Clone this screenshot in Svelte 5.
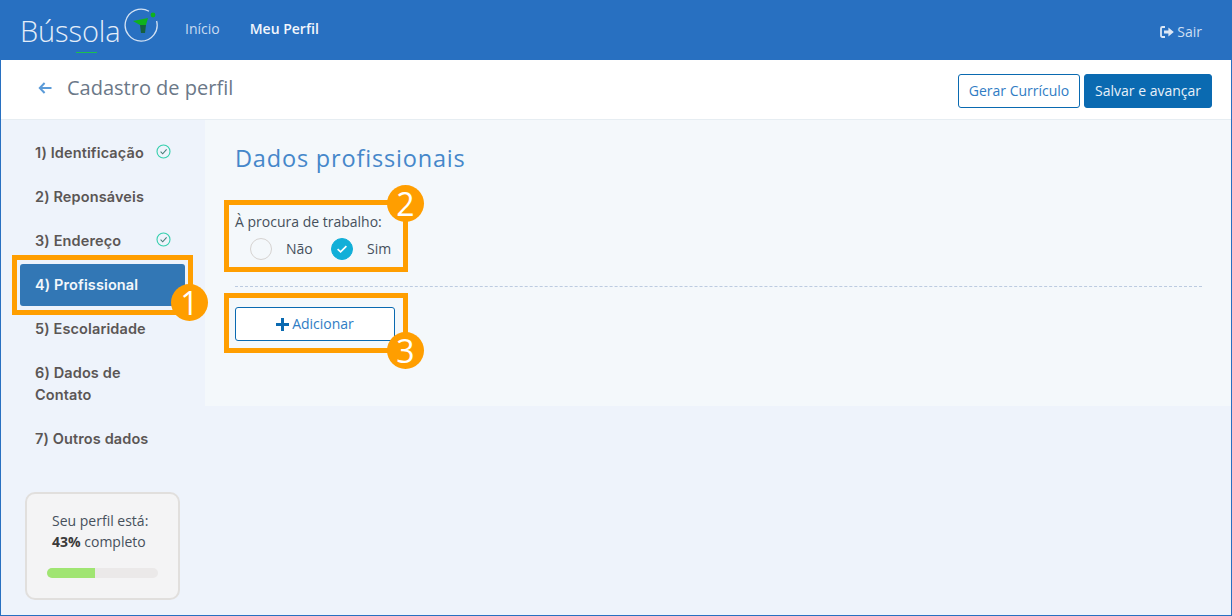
<script>
  const steps = [
    { label: '1) Identificação', done: true },
    { label: '2) Reponsáveis' },
    { label: '3) Endereço', done: true },
    { label: '4) Profissional', active: true },
    { label: '5) Escolaridade' },
    { label: '6) Dados de Contato' },
    { label: '7) Outros dados' }
  ];
  const marks = [
    { n: 1, cls: 'm1' },
    { n: 2, cls: 'm2' },
    { n: 3, cls: 'm3' }
  ];
</script>

<div class="page">
  <header class="top">
    <div class="logo">
      <span class="logo-text">Bússola</span>
      <svg class="compass" width="36" height="36" viewBox="0 0 36 36" fill="none">
        <path d="M26 4.2A16 16 0 1 0 33.6 14" stroke="#d4e2f3" stroke-width="1.3" />
        <circle cx="30" cy="8" r="2.4" fill="#0fb21c" />
        <path d="M10 14 25 11 23 18 17 18Z" fill="#0fb21c" />
        <path d="M17 18 23 18 22 26 18 26Z" fill="#16603f" />
      </svg>
      <i class="logo-line"></i>
    </div>
    <nav class="nav">
      <a href="#a">Início</a>
      <a href="#b" class="current">Meu Perfil</a>
    </nav>
    <a class="exit" href="#c">
      <svg width="14" height="12" viewBox="0 0 14 12" fill="none">
        <path d="M5 1H2.4A1.4 1.4 0 0 0 1 2.4v7.2A1.4 1.4 0 0 0 2.4 11H5" stroke="#dce7f5" stroke-width="1.8" />
        <path d="M4 4.4h4.4V1.6L13.8 6 8.4 10.4V7.6H4Z" fill="#dce7f5" />
      </svg>
      Sair
    </a>
  </header>

  <section class="sub">
    <svg class="back" width="14" height="12" viewBox="0 0 14 12" fill="none">
      <path d="M13.5 6H2M6.6 1 1.8 6l4.8 5" stroke="#5b9bd8" stroke-width="2" />
    </svg>
    <h1>Cadastro de perfil</h1>
    <div class="actions">
      <button class="btn outline">Gerar Currículo</button>
      <button class="btn solid">Salvar e avançar</button>
    </div>
  </section>

  <div class="body">
    <aside class="side">
      <ul class="steps">
        {#each steps as s}
          <li class="step" class:active={s.active}>
            <span>{s.label}</span>
            {#if s.done}
              <svg class="ok" width="15" height="15" viewBox="0 0 15 15" fill="none">
                <circle cx="7.5" cy="7.5" r="6.5" stroke="#35cfae" stroke-width="1.1" />
                <path d="M4.6 7.7 6.7 9.8 10.6 5.4" stroke="#4a7d78" stroke-width="1.1" />
              </svg>
            {/if}
          </li>
        {/each}
      </ul>
      <div class="progress-card">
        <p>Seu perfil está:<br /><b>43%</b> completo</p>
        <div class="track"><div class="fill" style="width: 43%"></div></div>
      </div>
    </aside>

    <main class="panel">
      <h2>Dados profissionais</h2>
      <div class="field">
        <div class="label">À procura de trabalho:</div>
        <div class="radios">
          <span class="radio"></span>
          <span class="opt no">Não</span>
          <span class="radio on">
            <svg width="12" height="10" viewBox="0 0 12 10" fill="none">
              <path d="M1.6 5.2 4.6 7.8 10.4 2.2" stroke="#fff" stroke-width="1.7" />
            </svg>
          </span>
          <span class="opt">Sim</span>
        </div>
      </div>
      <hr class="divider" />
      <button class="btn add">
        <svg width="13" height="13" viewBox="0 0 13 13"><path d="M5 0h3v5h5v3H8v5H5V8H0V5h5Z" fill="#0a6ab1" /></svg>
        <span class="add-text">Adicionar</span>
      </button>
    </main>
  </div>

  {#each marks as m}
    <div class="mark {m.cls}"><span class="num">{m.n}</span></div>
  {/each}
</div>

<style>
  :global(body) {
    margin: 0;
    background: #eef3fb;
  }
  * {
    box-sizing: border-box;
  }
  .page {
    position: relative;
    width: 1232px;
    height: 616px;
    border: 1px solid #2870c1;
    border-top: 0;
    background: #eef3fb;
    font-family: "Open Sans", "Liberation Sans", sans-serif;
    font-size: 14px;
    color: #46505c;
    display: flex;
    flex-direction: column;
    overflow: hidden;
  }
  a {
    text-decoration: none;
  }
  .top {
    height: 60px;
    margin: 0 -1px;
    background: #2870c1;
    display: flex;
    align-items: flex-start;
    flex: none;
  }
  .logo {
    position: relative;
    width: 185px;
    height: 60px;
    flex: none;
  }
  .logo-text {
    position: absolute;
    left: 20px;
    top: 11px;
    font-size: 29px;
    line-height: 40px;
    font-weight: 300;
    letter-spacing: -0.1px;
    color: #e4edf8;
  }
  .compass {
    position: absolute;
    left: 123px;
    top: 7px;
  }
  .logo-line {
    position: absolute;
    left: 76px;
    top: 52px;
    width: 21px;
    height: 1px;
    background: #1cc04f;
  }
  .nav {
    display: flex;
    gap: 30px;
    padding-top: 19px;
    line-height: 20px;
  }
  .nav a {
    color: #c9dcf2;
  }
  .nav a.current {
    color: #f2f6fc;
    font-weight: 600;
  }
  .exit {
    margin-left: auto;
    margin-right: 30px;
    margin-top: 22px;
    line-height: 20px;
    color: #cfdff2;
    font-size: 14px;
    display: flex;
    align-items: center;
    gap: 3px;
  }
  .sub {
    height: 60px;
    flex: none;
    background: #fff;
    border-bottom: 1px solid #e6edf2;
    display: flex;
    align-items: center;
    padding: 0 19px 0 37px;
  }
  .back {
    margin-right: 15px;
    flex: none;
    position: relative;
    top: -2px;
  }
  h1 {
    margin: 0;
    font-size: 20px;
    font-weight: 400;
    color: #6b7888;
    line-height: 28px;
    position: relative;
    top: -2px;
  }
  .actions {
    margin-left: auto;
    display: flex;
    gap: 4px;
    position: relative;
    top: 1px;
  }
  .btn {
    height: 34px;
    font: inherit;
    font-size: 14px;
    border-radius: 3px;
    padding: 0;
    cursor: pointer;
    border: 1px solid #0a6ab1;
  }
  .outline {
    width: 122px;
    background: #fff;
    color: #2f7cc4;
  }
  .solid {
    width: 128px;
    background: #0a6ab1;
    color: #e8f1f9;
  }
  .body {
    flex: 1;
    display: flex;
    min-height: 0;
  }
  .side {
    width: 204px;
    flex: none;
    padding: 12px 19px 15px 19px;
    display: flex;
    flex-direction: column;
  }
  .steps {
    list-style: none;
    margin: 0;
    padding: 0;
  }
  .step {
    margin-bottom: 2px;
    width: 165px;
    padding: 10px 15px;
    border-radius: 3px;
    line-height: 22px;
    font-family: Inter, "Noto Sans", sans-serif;
    font-weight: 600;
    font-size: 14.5px;
    letter-spacing: 0.12px;
    color: #5b5655;
    display: flex;
    align-items: center;
    justify-content: space-between;
  }
  .step.active {
    background: #3277b5;
    color: #f3f7fb;
  }
  .ok {
    flex: none;
    margin: -1px -1px 0 0;
    position: relative;
    top: -1px;
  }
  .progress-card {
    margin-top: auto;
    margin-left: 5px;
    width: 155px;
    height: 108px;
    border: 2px solid #e1dfdd;
    border-radius: 10px;
    background: #f4f4f5;
    padding: 16px 20px 0 25px;
    color: #46505c;
  }
  .progress-card p {
    margin: 0;
    line-height: 21px;
    white-space: nowrap;
  }
  .progress-card b {
    color: #3a3a3a;
  }
  .track {
    margin: 16px 0 0 -5px;
    width: 111px;
    height: 10px;
    border-radius: 5px;
    background: #ebe9e9;
    overflow: hidden;
  }
  .fill {
    height: 100%;
    background: #a0e572;
  }
  .panel {
    flex: 1;
    height: 286px;
    background: #f4f8fb;
    padding: 20px 29px 0 30px;
  }
  h2 {
    margin: 0;
    font-size: 23.5px;
    font-weight: 400;
    line-height: 36px;
    letter-spacing: 0.82px;
    color: #4587ca;
  }
  .field {
    margin-top: 36px;
  }
  .label {
    line-height: 20px;
    color: #46505c;
  }
  .radios {
    display: flex;
    align-items: center;
    margin-top: 6px;
    padding-left: 15px;
    height: 22px;
  }
  .radio {
    width: 22px;
    height: 22px;
    border-radius: 50%;
    border: 1px solid #d6d3d1;
    flex: none;
    display: flex;
    align-items: center;
    justify-content: center;
  }
  .radio.on {
    background: #11afd8;
    border-color: #11afd8;
  }
  .opt {
    margin-left: 14px;
    margin-top: -2px;
    color: #46505c;
  }
  .opt.no {
    width: 45px;
  }
  .divider {
    margin: 26px 0 20px;
    border: 0;
    border-top: 1px dashed #bccbe0;
    height: 0;
  }
  .add {
    width: 160px;
    background: #fff;
    color: #2f7cc4;
    display: flex;
    align-items: center;
    justify-content: center;
    gap: 3px;
  }
  .add-text {
    margin-top: -2px;
  }
  .mark {
    position: absolute;
    border: 5px solid #ff9e00;
    pointer-events: none;
  }
  .m1 {
    left: 11px;
    top: 255px;
    width: 181px;
    height: 60px;
  }
  .m2 {
    left: 223px;
    top: 200px;
    width: 184px;
    height: 72px;
  }
  .m3 {
    left: 223px;
    top: 293px;
    width: 184px;
    height: 60px;
  }
  .num {
    position: absolute;
    width: 37px;
    height: 37px;
    border-radius: 50%;
    background: #ff9e00;
    color: #fff;
    font-size: 32px;
    line-height: 37px;
    text-align: center;
  }
  .m1 .num {
    right: -20px;
    bottom: -11px;
  }
  .m2 .num {
    right: -21px;
    top: -20px;
  }
  .m3 .num {
    right: -21px;
    bottom: -21px;
  }
</style>
